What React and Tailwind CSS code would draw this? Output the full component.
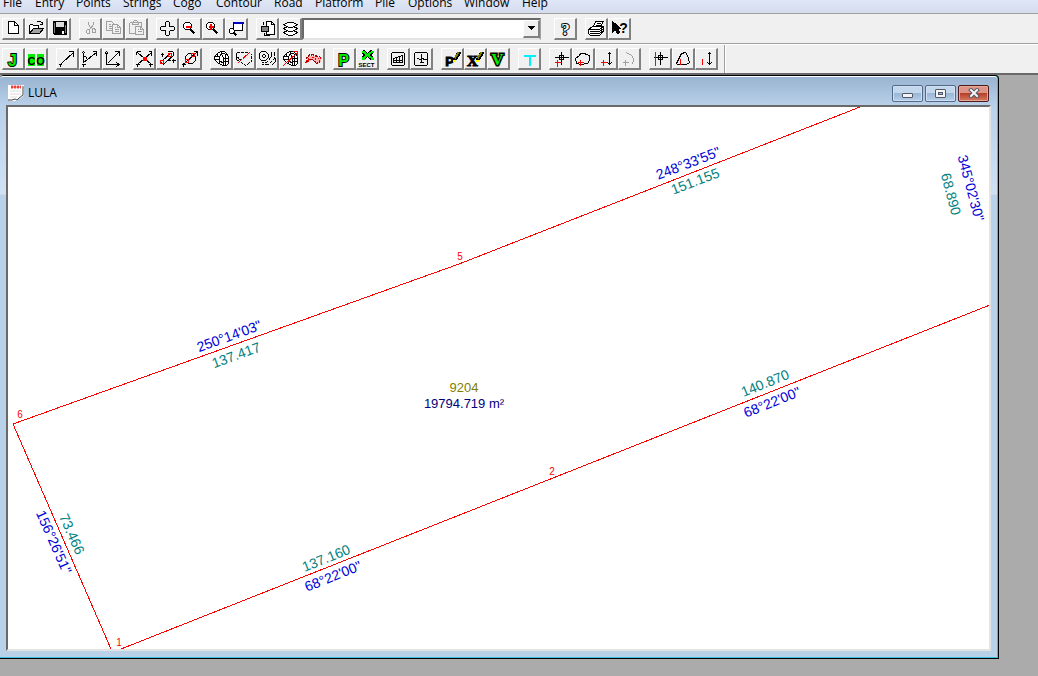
import { useState } from "react";

const MENUS = [
  { label: "File", width: "w-8" },
  { label: "Entry", width: "w-[41px]" },
  { label: "Points", width: "w-[47px]" },
  { label: "Strings", width: "w-[50px]" },
  { label: "Cogo", width: "w-[43px]" },
  { label: "Contour", width: "w-[58px]" },
  { label: "Road", width: "w-[41px]" },
  { label: "Platform", width: "w-[60px]" },
  { label: "Pile", width: "w-[33px]" },
  { label: "Options", width: "w-[56px]" },
  { label: "Window", width: "w-[58px]" },
  { label: "Help", width: "w-10" },
];

const K = "#000";
const R = "#f00";
const G = "#a0a0a0";
const GREEN = "#00ee00";

// letter used as an icon, green with a black edge
const Letter = ({ x, y, size, fill = GREEN, edge = 2, serif, children }) => (
  <text
    x={x}
    y={y}
    textAnchor="middle"
    fontSize={size}
    fontWeight="bold"
    fontFamily={serif ? "Liberation Serif, serif" : "Liberation Sans, sans-serif"}
    fill={fill}
    stroke={edge ? K : "none"}
    strokeWidth={edge}
    paintOrder="stroke"
  >
    {children}
  </text>
);

const Pencil = () => (
  <>
    <path d="M12 10L16 3H20L19 6L15 12L11 14Z" fill={K} stroke="none" />
    <path d="M13 10L17 4" stroke="#808000" strokeWidth="2" />
    <path d="M11 12H13V11" stroke="#ff0" strokeWidth="2" />
  </>
);

const Globe = () => (
  <>
    <path d="M4 8L8 4L11 3H14L17 6L18 9V15L16 17H12L7 14L4 11Z" fill="#fff" />
    <path d="M4 8H9L11 5V3M9 8V15M4 11H9M7 5V8M11 5L17 6M11 5L13 10V17M13 10H18M13 13H18M9 12L13 15M15 6V17" />
  </>
);

const ICONS = {
  New: (
    <>
      <path d="M6 3H12L16 7V15H6Z" fill="#fff" />
      <path d="M12 3V7H16" />
    </>
  ),
  Open: (
    <>
      <path d="M4 15V7L5 6H7L8 7H13V10" fill="#fff" />
      <path d="M4 15L8 10H18L14 15Z" fill="#a0a0a0" />
      <path d="M11 4L12 3H15L17 5M17 3V6H14" />
    </>
  ),
  Save: (
    <>
      <path d="M5 3H18V16H6L5 15Z" fill={K} />
      <path d="M8 4H15V8H8Z" fill="#ddd" stroke="#ddd" />
      <path d="M6 4V14M17 6V14" stroke="#777" />
      <path d="M14 12V15" stroke="#fff" strokeWidth="2" />
    </>
  ),
  Cut: (
    <g stroke={G}>
      <path d="M9 3V6L12 11M14 3V6L10 11" />
      <path d="M8 11H10V15H8L7 14V12ZM13 10H15L16 12V14H13Z" />
    </g>
  ),
  Copy: (
    <g stroke={G}>
      <path d="M4 3H9L11 5V12H4ZM6 6H8M6 8H9M6 10H9" />
      <path d="M10 6H15L18 9V15H10Z" fill="#f0f0f0" />
      <path d="M15 6V9H18M12 9H13M12 11H16M12 13H16" />
    </g>
  ),
  Paste: (
    <g stroke={G}>
      <path d="M4 4H16V8M4 4V15H10M7 4V6H13V4L11 2H9Z" />
      <path d="M10 8H15L18 11V16H10Z" fill="#f0f0f0" />
      <path d="M15 8V11H18M12 11H13M12 13H16" />
    </g>
  ),
  Pan: (
    <path d="M9 8V4L10 3H12L13 4V8M13 8H17L18 9V11L17 12H13M13 12V16L12 17H10L9 16V12M9 12H5L4 11V9L5 8H9" />
  ),
  "Zoom Out": (
    <>
      <path d="M6 4H10L12 6V9L10 11H6L4 9V6Z" fill="#fff" />
      <path d="M11 11L15 15" strokeWidth="2" />
      <path d="M6 8H11" stroke={R} strokeWidth="2" />
    </>
  ),
  "Zoom In": (
    <>
      <path d="M6 4H10L12 6V9L10 11H6L4 9V6Z" fill="#fff" />
      <path d="M11 11L15 15" strokeWidth="2" />
      <path d="M6 8H11M8 5V11" stroke={R} strokeWidth="2" />
    </>
  ),
  "Zoom Window": (
    <>
      <path d="M8 4H17V12H8Z" fill="#fff" />
      <path d="M8 4H18" stroke="#0000c0" strokeWidth="2" />
      <path d="M5 10H7L9 12V14L8 15H5L4 14V11Z" fill="#fff" />
      <path d="M8 14L11 17" strokeWidth="2" />
    </>
  ),
  Display: (
    <>
      <path d="M10 3H15L18 6V16H10Z" fill="#fff" />
      <path d="M15 3V6H18M7 3V6M8 14V17H13" />
      <path d="M5 8H12V13H5Z" fill="#808080" />
    </>
  ),
  Layers: (
    <g>
      <path d="M4 14L8 12H14L18 14L13 17H9Z" fill="#fff" />
      <path d="M4 10L8 8H14L18 10L13 13H9Z" fill="#fff" />
      <path d="M4 6L9 4H13L18 6L13 9H9Z" fill="#fff" />
    </g>
  ),
  Help: <Letter x={11} y={16} size={17} fill="#fff" edge={2} serif>?</Letter>,
  Print: (
    <>
      <path d="M8 8L10 3H18L15 8Z" fill="#fff" />
      <path d="M11 5H15M10 7H14" />
      <path d="M3 11L7 8H18V13L14 17H5L3 15Z" fill="#fff" />
      <path d="M3 11H14L18 8M4 13H14L18 10M4 15H14L18 12" />
    </>
  ),
  "Context Help": (
    <>
      <path d="M4 3V14L7 11L9 15L11 14L9 10H12Z" fill={K} />
      <Letter x={15} y={14} size={14} fill={K} edge={0}>?</Letter>
    </>
  ),
  Join: <Letter x={10} y={17} size={16}>J</Letter>,
  "Coordinates": (
    <>
      <path d="M3 6H9V17H3ZM12 6H18V17H12Z" fill={GREEN} stroke={GREEN} />
      <Letter x={6} y={16} size={11} fill={K} edge={0}>C</Letter>
      <Letter x={15} y={16} size={11} fill={K} edge={0}>O</Letter>
    </>
  ),
  Line: <path d="M4 15V18M2 16H5M5 15L17 4M12 3H17V8" />,
  Angle: <path d="M4 15V18M2 16H6M4 4V14M4 8H6L8 11M4 14L17 4M13 3H17V7M2 5L4 3L6 5" />,
  Axes: <path d="M4 4V16H17M2 6L4 3L6 6M14 14L17 16L14 18M5 15L16 4M12 3H17V7" />,
  Intersect: (
    <>
      <path d="M4 4L18 16M4 16L18 4M3 3V6M3 3H7M18 3V7M15 3H18M4 15V18M2 16H6M17 15V18M15 16H19" />
      <rect x="9" y="8" width="4" height="4" fill={R} stroke="none" />
    </>
  ),
  Offset: (
    <>
      <path d="M6 12L14 5M8 15L17 7M11 3H16M17 3V7M4 13L8 17" />
      <path d="M4 6H7M6 4V8M15 12H19M17 10V14M9 8H11M12 12H14" />
      <path d="M4 12H7V15H4ZM12 5H15V8H12Z" stroke={R} />
    </>
  ),
  Arc: (
    <>
      <path d="M9 5H13L16 8V12L13 15H9L6 12V8ZM4 16L18 3M14 3H18V7M2 16H6M4 14V18" />
      <path d="M12 5H15V8H12ZM6 11H9V14H6Z" stroke={R} />
    </>
  ),
  Mesh: <Globe />,
  Breaklines: (
    <>
      <path d="M3 4H16M3 4V11L12 17L18 13V5M3 8L8 12" strokeDasharray="3 1" />
      <path d="M5 14L17 3" stroke={R} strokeDasharray="5 1" />
    </>
  ),
  Contours: (
    <>
      <path d="M5 3H9L12 6V9L9 12H5L3 10V5ZM7 6H8L9 7V8L8 9H7L6 8V7Z" />
      <path d="M15 3V8L10 14H5M18 3V10L12 16H5M19 9V13L15 17" strokeDasharray="4 1" />
    </>
  ),
  Volume: (
    <>
      <Globe />
      <path d="M4 17L18 4M13 3H18V8" stroke={R} />
    </>
  ),
  Surface: (
    <>
      <path
        d="M3 13L7 7H12L15 9L20 8L18 14L14 15L10 11L5 14Z"
        fill="#ffb0b0"
        stroke="none"
      />
      <path d="M4 10L7 7H11L15 10H19M4 12L8 9H11L15 12H18M4 14L8 11H10L14 14H17" stroke={R} strokeDasharray="1 1" />
      <path d="M3 11L7 6H11L15 8H17L19 11M3 14L7 11H10L14 15L18 13" strokeDasharray="3 1" stroke="#900" />
    </>
  ),
  Profile: <Letter x={10} y={17} size={16}>P</Letter>,
  "Cross Section": (
    <>
      <path d="M6 3L16 10M16 3L6 10" stroke={K} strokeWidth="4" />
      <path d="M6 3L16 10M16 3L6 10M5 3H8M14 3H17M5 10H8M14 10H17" stroke={GREEN} strokeWidth="2" />
      <Letter x={10} y={18} size={6} fill={K} edge={0}>SECT</Letter>
    </>
  ),
  "Long Plot": (
    <>
      <path d="M5 4H16L17 5V16L16 17H5L4 16V5Z" />
      <path d="M6 10L9 9L15 7V14H6ZM6 12H15M9 9V14M12 8V14" />
    </>
  ),
  "Section Plot": (
    <>
      <path d="M5 4H16L17 5V16L16 17H5L4 16V5Z" />
      <path d="M11 5V14M6 10H8L9 11H10L12 10L14 11H16M9 14H13" />
    </>
  ),
  "Edit Profile": (
    <>
      <Letter x={8} y={17} size={13} fill={K} edge={1}>P</Letter>
      <Pencil />
    </>
  ),
  "Edit Section": (
    <>
      <Letter x={8} y={17} size={15} fill={K} edge={1} serif>X</Letter>
      <Pencil />
    </>
  ),
  View: <Letter x={10} y={16} size={17} serif edge={3}>V</Letter>,
  Text: <path d="M5 7H17M11 7V17" stroke="#00f0ff" strokeWidth="2" />,
  "Add Point": (
    <>
      <path d="M5 9H19M12 3V16M10 7H14V11H10Z" />
      <path d="M5 14H12M8 11V18" stroke={R} />
    </>
  ),
  "Add String": (
    <>
      <path d="M4 15L3 10L7 7L8 5H12L14 6L17 7V12L15 15L9 16Z" />
      <path d="M5 14H11M8 11V17" stroke={R} />
    </>
  ),
  "Add Height": (
    <>
      <path d="M14 4V16M12 6L14 4L16 6M12 14L14 16L16 14" />
      <path d="M5 14H11M8 11V17" stroke={R} />
    </>
  ),
  "Add Arc": (
    <path d="M8 4L13 7L15 10V13L13 16M4 14H10M7 11V17" stroke={G} />
  ),
  "Move Point": (
    <>
      <path d="M4 9H18M11 3V16M9 7H13V11H9Z" />
      <path d="M6 3V17" stroke={R} />
    </>
  ),
  "Move String": (
    <>
      <path d="M4 15L9 5L13 4L15 7L17 14L14 16H5Z" />
      <path d="M8 10V16" stroke={R} />
    </>
  ),
  "Move Height": (
    <>
      <path d="M14 4V16M12 6L14 4L16 6M12 14L14 16L16 14" />
      <path d="M7 10V16" stroke={R} />
    </>
  ),
};

const FILE_GROUPS = [
  ["New", "Open", "Save"],
  ["Cut", "Copy", "Paste"],
  ["Pan", "Zoom Out", "Zoom In", "Zoom Window"],
  ["Display", "Layers"],
];

const HELP_GROUPS = [["Help"], ["Print", "Context Help"]];

const SURVEY_GROUPS = [
  ["Join", "Coordinates"],
  ["Line", "Angle", "Axes"],
  ["Intersect", "Offset", "Arc"],
  ["Mesh", "Breaklines", "Contours", "Volume", "Surface"],
  ["Profile", "Cross Section"],
  ["Long Plot", "Section Plot"],
  ["Edit Profile", "Edit Section", "View"],
  ["Text"],
  ["Add Point", "Add String", "Add Height", "Add Arc"],
  ["Move Point", "Move String", "Move Height"],
];

const DISABLED = ["Cut", "Copy", "Paste", "Add Arc"];

const BOUNDARY = [
  "M103 542L5 317L451 157L852 0",
  "M113 542L982 198",
];

const BEARINGS = [
  { text: "250°14'03\"", x: 221, y: 229, angle: -20, color: "#0000d8" },
  { text: "137.417", x: 228, y: 248, angle: -20, color: "#008080" },
  { text: "248°33'55\"", x: 680, y: 56, angle: -21, color: "#0000d8" },
  { text: "151.155", x: 687, y: 74, angle: -21, color: "#008080" },
  { text: "345°02'30\"", x: 963, y: 81, angle: 75, color: "#0000d8" },
  { text: "68.890", x: 943, y: 87, angle: 75, color: "#008080" },
  { text: "140.870", x: 757, y: 276, angle: -22, color: "#008080" },
  { text: "68°22'00\"", x: 764, y: 295, angle: -22, color: "#0000d8" },
  { text: "137.160", x: 318, y: 451, angle: -22, color: "#008080" },
  { text: "68°22'00\"", x: 325, y: 469, angle: -22, color: "#0000d8" },
  { text: "73.466", x: 64, y: 427, angle: 66, color: "#008080" },
  { text: "156°26'51\"", x: 46, y: 435, angle: 66, color: "#0000d8" },
];

const POINTS = [
  { text: "6", x: 12, y: 311 },
  { text: "5", x: 452, y: 153 },
  { text: "2", x: 544, y: 368 },
  { text: "1", x: 111, y: 539 },
];

function ToolGroup({ names }) {
  return (
    <div className="flex">
      {names.map((name) => (
        <button
          key={name}
          type="button"
          aria-label={name}
          title={name}
          disabled={DISABLED.includes(name)}
          className="h-[22px] w-[23px] border-t border-l border-r-2 border-b-2 border-t-white border-l-white border-r-[#808080] border-b-[#808080] bg-[#f0f0f0]"
        >
          <svg
            viewBox="0.5 0.5 20 19"
            className="block h-[19px] w-5"
            fill="none"
            stroke={K}
            shapeRendering="crispEdges"
          >
            {ICONS[name]}
          </svg>
        </button>
      ))}
    </div>
  );
}

function MenuBar() {
  return (
    <nav className="flex h-[13px] items-end bg-linear-to-b from-[#dfe6f6] to-[#d4dcee] pb-[2px] pl-[3px]">
      {MENUS.map((menu) => (
        <button
          key={menu.label}
          type="button"
          className={`${menu.width} shrink-0 text-left text-[12px] leading-4 whitespace-nowrap`}
        >
          {menu.label}
        </button>
      ))}
    </nav>
  );
}

function LayerSelect() {
  const [layer, setLayer] = useState("");

  return (
    <div className="relative h-[22px] w-[239px]">
      <select
        aria-label="Layer"
        value={layer}
        onChange={(e) => setLayer(e.target.value)}
        className="block h-full w-full appearance-none border-2 border-t-[#696969] border-l-[#696969] border-r-[#a0a0a0] border-b-[#e3e3e3] bg-white px-1 text-[12px]"
      >
        <option value=""></option>
      </select>
      <span className="pointer-events-none absolute top-[2px] right-[1px] flex h-[18px] w-[17px] items-center justify-center border-t border-l border-r-2 border-b-2 border-t-white border-l-white border-r-[#808080] border-b-[#808080] bg-[#f0f0f0]">
        <svg viewBox="0 0 7 4" className="h-1 w-[7px]" shapeRendering="crispEdges">
          <path d="M0 0H7L4 4H3Z" />
        </svg>
      </span>
    </div>
  );
}

function Toolbars() {
  return (
    <div className="bg-[#f0f0f0]">
      <div className="flex h-[30px] items-center border-t border-[#a0a0a0] pl-[2px]">
        <div className="flex gap-2">
          {FILE_GROUPS.map((names) => (
            <ToolGroup key={names[0]} names={names} />
          ))}
        </div>
        <LayerSelect />
        <div className="ml-[13px] flex gap-2">
          {HELP_GROUPS.map((names) => (
            <ToolGroup key={names[0]} names={names} />
          ))}
        </div>
      </div>
      <div className="border-t border-[#a0a0a0]">
        <div className="flex h-[29px] items-center border-t border-white pl-[2px]">
          <div className="flex gap-2">
            {SURVEY_GROUPS.map((names) => (
              <ToolGroup key={names[0]} names={names} />
            ))}
          </div>
          <div className="ml-[6px] h-full border-r border-l border-l-[#a0a0a0] border-r-white" />
        </div>
      </div>
    </div>
  );
}

function DocumentIcon() {
  return (
    <svg viewBox="0 0 16 16" className="h-4 w-4" aria-hidden="true">
      <path d="M0 0H16V10L13 13L10 14L8 16H1L0 15Z" fill="#fff" />
      <path d="M0 15H4L7 14L9 15L11 13L15 10V1" fill="none" stroke="#444" />
      <path d="M2 6H13M2 9H13M2 12H9" stroke="#dcdcdc" fill="none" />
      <path d="M3 2H13" stroke="#f04040" strokeWidth="3" strokeDasharray="2 1" />
      <path d="M3 2H13" stroke="#f04040" />
    </svg>
  );
}

function TitleBar() {
  const button =
    "flex h-[17px] w-[31px] items-center justify-center rounded-[2px] border border-[#51688a] bg-[linear-gradient(#c3d7ec_45%,#9bb7d6_50%,#b5cee8)] shadow-[inset_0_0_0_1px_#d0e0f2]";

  return (
    <header className="flex h-7 items-center pt-[4px] pr-[2px] pl-[2px]">
      <DocumentIcon />
      <h1 className="ml-1 flex-1 text-[12px] leading-4">LULA</h1>
      <div className="flex gap-[2px]">
        <button type="button" aria-label="Minimize" className={button}>
          <span className="mt-[4px] h-[5px] w-[11px] rounded-[1px] border border-[#535666] bg-[#f4f4f4]" />
        </button>
        <button type="button" aria-label="Maximize" className={button}>
          <span className="flex h-[9px] w-[11px] items-center justify-center rounded-[1px] border border-[#535666] bg-[#f4f4f4]">
            <span className="h-[3px] w-[5px] border border-[#535666] bg-[#9bb7d6]" />
          </span>
        </button>
        <button
          type="button"
          aria-label="Close"
          className="flex h-[17px] w-[31px] items-center justify-center rounded-[2px] border border-[#4e1a1c] bg-[linear-gradient(#dd9486_45%,#b9402a_50%,#d37b62)] shadow-[inset_0_0_0_1px_#e5a898]"
        >
          <svg viewBox="0 0 12 10" className="h-[10px] w-3">
            <path d="M3 2L9 8M9 2L3 8" stroke="#535666" strokeWidth="4" strokeLinecap="square" />
            <path d="M3 2L9 8M9 2L3 8" stroke="#f6f6f6" strokeWidth="2" strokeLinecap="square" />
          </svg>
        </button>
      </div>
    </header>
  );
}

function PlanView() {
  return (
    <svg
      className="block min-h-0 w-full flex-1 bg-white"
      fontFamily="Liberation Sans, Arial, sans-serif"
      textAnchor="middle"
    >
      {BOUNDARY.map((d) => (
        <path key={d} d={d} fill="none" stroke={R} shapeRendering="crispEdges" />
      ))}
      {BEARINGS.map((item) => (
        <text
          key={`${item.x}-${item.y}`}
          transform={`translate(${item.x} ${item.y}) rotate(${item.angle})`}
          y="5"
          fontSize="14"
          fill={item.color}
        >
          {item.text}
        </text>
      ))}
      {POINTS.map((point) => (
        <text key={point.text} x={point.x} y={point.y} fontSize="10" fill={R}>
          {point.text}
        </text>
      ))}
      <text x="456" y="285" fontSize="13" fill="#808000">
        9204
      </text>
      <text x="456" y="301" fontSize="13" fill="#000080">
        19794.719 m²
      </text>
    </svg>
  );
}

export default function App() {
  return (
    <div className="flex h-screen flex-col overflow-hidden bg-[#ababab] font-['Open_Sans','Noto_Sans',sans-serif] text-black">
      <MenuBar />
      <Toolbars />
      <main className="flex min-h-0 flex-1 flex-col border-t-2 border-[#696969] pr-[39px] pb-[17px]">
        <section className="flex min-h-0 flex-1 flex-col rounded-t-[4px] border-t border-r border-b border-black bg-[#35bfe0] pr-px pb-px">
          <div className="flex min-h-0 flex-1 flex-col rounded-t-[3px] border-t border-white bg-[linear-gradient(#99b4d1,#bad1ea_30px,#d0e1f4_117px,#bad1ea_118px)] pr-[6px] pb-[6px] pl-[6px]">
            <TitleBar />
            <div className="flex min-h-0 flex-1 flex-col border-2 border-t-[#696969] border-l-[#696969] border-r-[#e3e3e3] border-b-[#e3e3e3]">
              <PlanView />
            </div>
          </div>
        </section>
      </main>
    </div>
  );
}
